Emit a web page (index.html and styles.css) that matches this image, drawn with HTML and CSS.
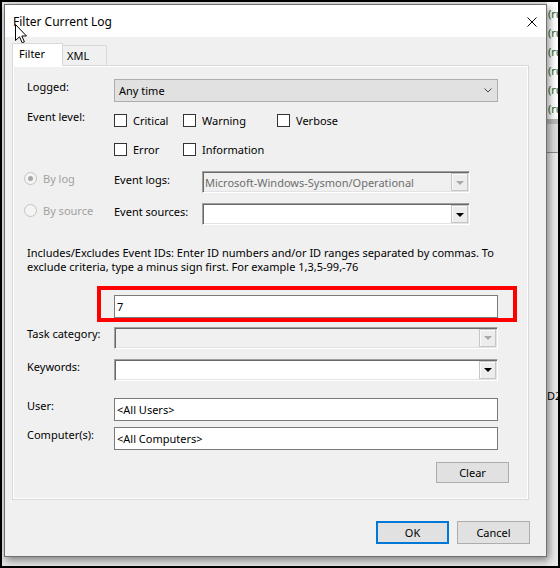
FILE: index.html
```html
<!DOCTYPE html>
<html lang="en">
<head>
  <meta charset="UTF-8" />
  <title>Filter Current Log</title>
  <link rel="stylesheet" href="styles.css">
</head>
<body>

  <div class="screen">
    <div class="bg-main"></div>
    <div class="bg-side">
      <div class="log-rows">
        <span>(ru</span><span>(ru</span><span>(ru</span><span>(ru</span><span>(ru</span><span>(ru</span>
      </div>
      <div class="side-lower">
        <div class="side-band"></div>
        <div class="side-cell"></div>
        <div class="side-cell side-text">D2</div>
      </div>
    </div>

    <div class="dialog">
      <div class="titlebar">
        <span class="title">Filter Current Log</span>
        <svg class="close" width="10" height="10" viewBox="0 0 10 10">
          <path d="M0.5 0.5 L9.5 9.5 M9.5 0.5 L0.5 9.5" stroke="#000" stroke-width="1" fill="none"/>
        </svg>
      </div>

      <div class="dialog-body">
        <div class="tabs">
          <div class="tab tab-filter active">Filter</div>
          <div class="tab tab-xml">XML</div>
        </div>

        <div class="panel">
          <div class="row row-logged">
            <div class="lbl">Logged:</div>
            <div class="select">
              <span>Any time</span>
              <svg class="chevron" width="8" height="5" viewBox="0 0 8 5">
                <path d="M0.5 0.5 L4 4 L7.5 0.5" stroke="#444" stroke-width="1" fill="none"/>
              </svg>
            </div>
          </div>

          <div class="row row-level">
            <div class="lbl lbl-level">Event level:</div>
            <div class="checks">
              <div class="check"><span class="box"></span>Critical</div>
              <div class="check"><span class="box"></span>Warning</div>
              <div class="check"><span class="box"></span>Verbose</div>
            </div>
          </div>

          <div class="row row-level2">
            <div class="lbl"></div>
            <div class="checks">
              <div class="check"><span class="box"></span>Error</div>
              <div class="check"><span class="box"></span>Information</div>
            </div>
          </div>

          <div class="row row-bylog">
            <div class="radio-item"><span class="radio checked"></span>By log</div>
            <div class="lbl lbl-src">Event logs:</div>
            <div class="combo combo-short disabled">
              <span class="combo-text">Microsoft-Windows-Sysmon/Operational</span>
              <span class="drop"><i></i></span>
            </div>
          </div>

          <div class="row row-bysource">
            <div class="radio-item"><span class="radio"></span>By source</div>
            <div class="lbl lbl-src">Event sources:</div>
            <div class="combo combo-short">
              <span class="combo-text"></span>
              <span class="drop"><i></i></span>
            </div>
          </div>

          <p class="hint">Includes/Excludes Event IDs: Enter ID numbers and/or ID ranges separated by commas. To<br>exclude criteria, type a minus sign first. For example 1,3,5-99,-76</p>

          <div class="row row-ids">
            <div class="lbl"></div>
            <div class="textbox">7</div>
            <div class="highlight"></div>
          </div>

          <div class="row row-task">
            <div class="lbl lbl-up">Task category:</div>
            <div class="combo combo-wide disabled">
              <span class="combo-text"></span>
              <span class="drop"><i></i></span>
            </div>
          </div>

          <div class="row row-keywords">
            <div class="lbl">Keywords:</div>
            <div class="combo combo-wide">
              <span class="combo-text"></span>
              <span class="drop"><i></i></span>
            </div>
          </div>

          <div class="row row-user">
            <div class="lbl">User:</div>
            <div class="textbox">&lt;All Users&gt;</div>
          </div>

          <div class="row row-computer">
            <div class="lbl">Computer(s):</div>
            <div class="textbox">&lt;All Computers&gt;</div>
          </div>

          <div class="row-actions">
            <button class="btn">Clear</button>
          </div>
        </div>

        <div class="footer">
          <button class="btn btn-default">OK</button>
          <button class="btn">Cancel</button>
        </div>
      </div>
    </div>

    <svg class="cursor" width="13" height="20" viewBox="0 0 13 20">
      <path d="M0.5 0.5 L0.5 16.5 L4.5 12.8 L7.2 18.8 L9.4 17.8 L6.8 12 L11.5 12 Z" fill="#fff" stroke="#000" stroke-width="1" stroke-linejoin="miter"/>
    </svg>
  </div>

</body>
</html>
```

FILE: styles.css
```css
* {
  box-sizing: border-box;
}

body {
  margin: 0;
  background: #000;
  font-family: "Noto Sans", "Open Sans", sans-serif;
  font-size: 11px;
  color: #000;
}

.screen {
  position: relative;
  width: 560px;
  height: 568px;
  border: 2px solid #000;
  display: flex;
  overflow: hidden;
}

/* window behind the dialog */
.bg-main {
  flex: 1;
  background: #e4e4e4;
}

.bg-side {
  width: 11px;
  display: flex;
  flex-direction: column;
  background: #fff;
  overflow: hidden;
}

.log-rows {
  padding-top: 2px;
}

.log-rows span {
  display: block;
  height: 19px;
  line-height: 19px;
  padding-left: 1px;
  color: #1d5f1d;
  white-space: nowrap;
}

.side-lower {
  flex: 1;
  display: flex;
  flex-direction: column;
  margin-top: 1px;
}

.side-band {
  height: 5px;
  background: #b9b9b9;
}

.side-cell {
  height: 29px;
  background: #dcdcdc;
  border-bottom: 1px solid #8a8a8a;
}

.side-text {
  flex: 1;
  background: #e9e9e9;
  border-bottom: none;
  padding-top: 236px;
  line-height: 14px;
  white-space: nowrap;
}

/* dialog */
.dialog {
  position: absolute;
  left: 2px;
  top: 2px;
  width: 543px;
  height: 553px;
  border: 1px solid #707070;
  background: #f0f0f0;
  box-shadow: 2px 3px 8px rgba(0, 0, 0, 0.45);
  display: flex;
  flex-direction: column;
}

.titlebar {
  height: 32px;
  background: #fff;
  display: flex;
  align-items: center;
  justify-content: space-between;
  padding: 0 9px 0 8px;
}

.title {
  font-size: 12px;
  margin-top: 1px;
}

.close {
  margin-top: 1px;
}

.dialog-body {
  flex: 1;
  padding: 6px 0 0 7px;
}

.tabs {
  display: flex;
  align-items: flex-end;
  height: 22px;
  position: relative;
  z-index: 1;
}

.tab {
  height: 20px;
  border: 1px solid #d9d9d9;
  border-bottom: none;
  background: #f0f0f0;
  line-height: 19px;
}

.tab-filter {
  width: 51px;
  padding-left: 6px;
}

.tab-xml {
  width: 45px;
  margin-left: -1px;
  padding-left: 4px;
  line-height: 20px;
}

.tab.active {
  height: 23px;
  background: #fff;
  margin-bottom: -1px;
}

.panel {
  width: 517px;
  height: 435px;
  border: 1px solid #d9d9d9;
  box-shadow: inset 1px 1px 0 #fff, inset -1px -1px 0 #fff;
  padding-left: 14px;
  display: flex;
  flex-direction: column;
}

.row {
  display: flex;
  align-items: flex-start;
  position: relative;
}

.lbl {
  width: 87px;
  flex: none;
  line-height: 15px;
  white-space: nowrap;
}

.row-logged { margin-top: 13px; }
.row-level { margin-top: 11px; }
.row-level2 { margin-top: 13px; }
.row-bylog { margin-top: 13px; }
.row-bysource { margin-top: 10px; }
.row-ids { margin-top: 20px; }
.row-task { margin-top: 9px; }
.row-keywords { margin-top: 10px; }
.row-user { margin-top: 17px; }
.row-computer { margin-top: 6px; }

.lbl-level {
  margin-top: -4px;
}

.lbl-up {
  margin-top: -1px;
}

/* Logged dropdown */
.select {
  width: 384px;
  height: 23px;
  background: #e1e1e1;
  border: 1px solid #adadad;
  display: flex;
  align-items: center;
  justify-content: space-between;
  padding: 0 5px 0 4px;
}

/* checkboxes */
.checks {
  display: grid;
  grid-template-columns: 69px 94px auto;
  height: 16px;
  margin: -1px 0 1px;
}

.check {
  display: flex;
  align-items: center;
  gap: 6px;
  white-space: nowrap;
}

.box {
  width: 13px;
  height: 13px;
  border: 1px solid #333;
  background: #fff;
  margin-top: 1px;
}

/* radios */
.radio-item {
  width: 90px;
  margin-left: -3px;
  display: flex;
  align-items: center;
  gap: 6px;
  color: #a0a0a0;
  height: 15px;
}

.radio {
  width: 13px;
  height: 13px;
  border: 1px solid #c4c4c4;
  border-radius: 50%;
  background: #f4f4f4;
  display: flex;
  align-items: center;
  justify-content: center;
}

.radio.checked::after {
  content: "";
  width: 5px;
  height: 5px;
  border-radius: 50%;
  background: #a8a8a8;
}

.lbl-src {
  width: 88px;
  margin-top: 1px;
}

/* classic combobox */
.combo {
  height: 22px;
  background: #fff;
  border-top: 1px solid #a0a0a0;
  border-left: 1px solid #a0a0a0;
  border-right: 1px solid #fff;
  border-bottom: 1px solid #fff;
  box-shadow: inset 1px 1px 0 #696969, inset -1px -1px 0 #e3e3e3;
  display: flex;
  align-items: center;
  padding: 1px 1px 1px 2px;
}

.combo-short {
  width: 268px;
}

.combo-wide {
  width: 384px;
}

.combo.disabled {
  background: #f0f0f0;
}

.combo-text {
  flex: 1;
  white-space: nowrap;
  overflow: hidden;
  color: #6d6d6d;
}

.drop {
  width: 17px;
  height: 18px;
  background: #ededed;
  border: 1px solid #c6c6c6;
  box-shadow: inset 1px 1px 0 #fbfbfb;
  display: flex;
  align-items: center;
  justify-content: center;
}

.drop i {
  width: 0;
  height: 0;
  border-left: 4px solid transparent;
  border-right: 4px solid transparent;
  border-top: 4px solid #000;
  margin-top: 1px;
}

.combo.disabled .drop i {
  border-top-color: #a8a8a8;
}

/* hint paragraph */
.hint {
  margin: 21px 0 0;
  line-height: 14.4px;
  white-space: nowrap;
}

.textbox {
  width: 384px;
  height: 23px;
  background: #fff;
  border: 1px solid #7a7a7a;
  line-height: 21px;
  padding-left: 2px;
}

.highlight {
  position: absolute;
  left: 70px;
  top: -9px;
  width: 420px;
  height: 36px;
  border: 4px solid #f00;
}

.row-actions {
  display: flex;
  justify-content: flex-end;
  padding-right: 19px;
  margin-top: 12px;
}

.btn {
  width: 73px;
  height: 21px;
  background: #e1e1e1;
  border: 1px solid #adadad;
  font-family: inherit;
  font-size: 11px;
  color: #000;
  padding: 0;
}

.footer {
  display: flex;
  justify-content: flex-end;
  gap: 8px;
  padding-right: 16px;
  margin-top: 21px;
}

.footer .btn {
  height: 23px;
}

.btn-default {
  border: 2px solid #0078d7;
}

.cursor {
  position: absolute;
  left: 13px;
  top: 22px;
}
```
